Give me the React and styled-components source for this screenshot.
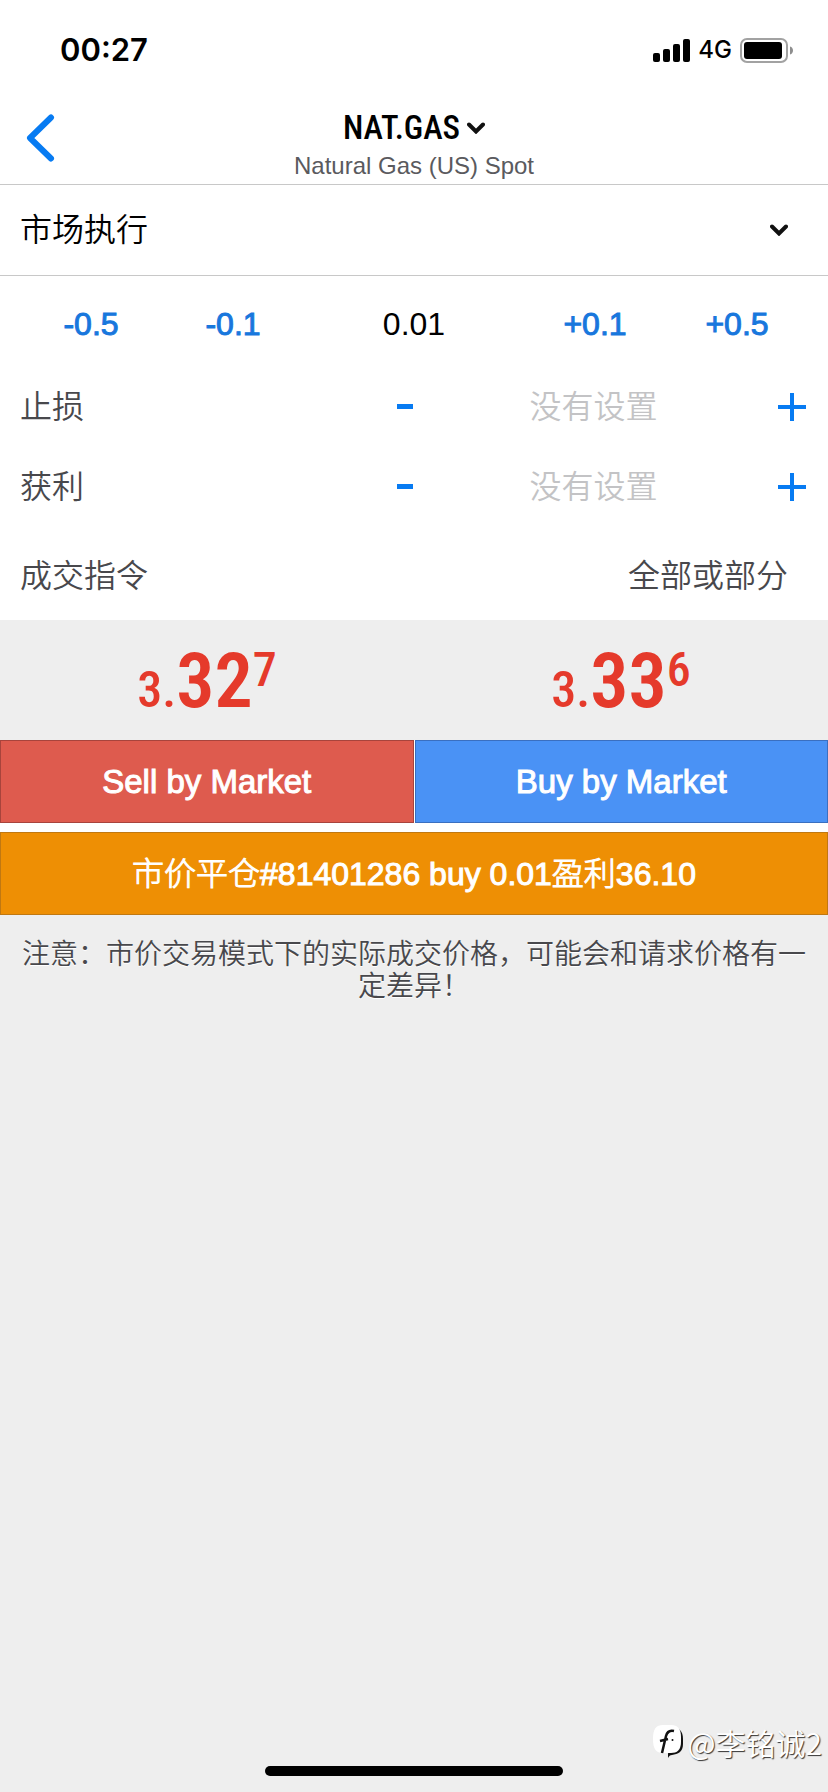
import React, { useState } from 'react';
import styled, { createGlobalStyle } from 'styled-components'

const GlobalStyle = createGlobalStyle
  `
  * {
    box-sizing: border-box;
  }

  body {
    margin: 0;
    background: #eeeeee;
    font-family: "Liberation Sans", "Noto Sans CJK SC", sans-serif;
    font-size: 32px;
    font-weight: 350;
    line-height: 40px;
    color: #000000;
  }

  button, input, select {
    margin: 0;
    padding: 0;
    border: none;
    border-radius: 0;
    background: none;
    color: inherit;
    font: inherit;
    outline: none;
    appearance: none;
  }

  button, select {
    cursor: pointer;
  }
`

const Page = styled.div
  `
  display: flex;
  flex-direction: column;
  min-height: 100vh;
`

const StatusBar = styled.div
  `
  display: flex;
  align-items: center;
  justify-content: space-between;
  height: 100px;
  padding: 0 34px 0 60px;
  background: #ffffff;
  font-family: Inter, sans-serif;
`

const Clock = styled.span
  `
  font-size: 31px;
  font-weight: 600;
`

const StatusIcons = styled.div
  `
  display: flex;
  align-items: center;
  gap: 8px;
  font-size: 24px;
  font-weight: 500;
`

const NavBar = styled.header
  `
  display: grid;
  grid-template-columns: 80px 1fr 80px;
  height: 85px;
  background: #ffffff;
  border-bottom: 1px solid #c8c8c8;
`

const BackButton = styled.button
  `
  display: flex;
  align-items: center;
  padding: 0 0 8px 26px;
  color: #077bf2;
`

const TitleBlock = styled.div
  `
  display: flex;
  flex-direction: column;
  align-items: center;
  padding-top: 6px;
`

const SymbolButton = styled.button
  `
  display: flex;
  align-items: center;
  gap: 7px;
  font-family: "Roboto Condensed", "Liberation Sans Narrow", sans-serif;
  font-size: 33px;
  font-weight: 500;
  line-height: 44px;
`

const Subtitle = styled.span
  `
  font-size: 24px;
  line-height: 32px;
  color: #5a5a5e;
`

const Form = styled.form
  `
  display: flex;
  flex-direction: column;
  background: #ffffff;
`

const ExecutionRow = styled.label
  `
  display: flex;
  align-items: center;
  height: 91px;
  padding: 0 40px 0 20px;
  border-bottom: 1px solid #c8c8c8;
`

const Picker = styled.select
  `
  flex: 1;
  color: ${props => props.$muted ? '#48484c' : '#000000'};
  text-align-last: ${props => props.$end ? 'right' : 'left'};
`

const LotRow = styled.div
  `
  display: grid;
  grid-template-columns: 142px 142px 1fr 142px 142px;
  align-items: center;
  height: 91px;
  padding: 4px 20px 0;
`

const StepButton = styled.button
  `
  color: #1877dd;
  -webkit-text-stroke: 1px #1877dd;
`

const LotInput = styled.input
  `
  width: 100%;
  text-align: center;
`

const Row = styled.div
  `
  display: grid;
  grid-template-columns: minmax(0, 1fr) 32px minmax(0, 1fr);
  align-items: center;
  height: 80px;
  padding: 0 22px 0 20px;
  color: #48484c;
`

const PriceField = styled.div
  `
  display: flex;
  align-items: center;
`

const PriceInput = styled.input
  `
  flex: 1;
  min-width: 0;
  text-align: center;

  &::placeholder {
    color: #c3c3c5;
    opacity: 1;
  }
`

const IconButton = styled.button
  `
  display: flex;
  justify-content: ${props => props.$end ? 'flex-end' : 'flex-start'};
  width: ${props => props.$end ? '48px' : '100%'};
  color: #077bf2;
`

const FillRow = styled.label
  `
  display: flex;
  align-items: center;
  height: 93px;
  padding: 4px 40px 0 20px;
  color: #48484c;
`

const Quotes = styled.div
  `
  display: grid;
  grid-template-columns: 1fr 1fr;
  height: 120px;
`

const Quote = styled.div
  `
  display: flex;
  align-items: baseline;
  justify-content: center;
  font-family: "Roboto Condensed", "Liberation Sans Narrow", sans-serif;
  font-weight: 500;
  line-height: 122px;
  color: #e53a2b;
`

const Whole = styled.span
  `
  font-size: 50px;
`

const Pips = styled.span
  `
  font-size: 76px;
  font-weight: 600;
`

const Fraction = styled.sup
  `
  align-self: flex-start;
  font-size: 48px;
  line-height: 100px;
`

const Actions = styled.div
  `
  display: grid;
  grid-template-columns: 1fr 1fr;
  gap: 9px 1px;
  background: #ffffff;
`

const ActionButton = styled.button
  `
  grid-column: ${props => props.$wide ? '1 / -1' : 'auto'};
  height: 83px;
  border: 1px solid ${props => props.$edge};
  background: ${props => props.$fill};
  font-size: ${props => props.$wide ? '32px' : '33px'};
  font-weight: 300;
  color: #ffffff;
  -webkit-text-stroke: 1px #ffffff;
`

const Note = styled.p
  `
  margin: 0;
  padding: 24px 20px;
  font-size: 28px;
  line-height: 32px;
  text-align: center;
  color: #48484c;
  text-shadow: 0 1px 0 #ffffff;
`

const Footer = styled.footer
  `
  display: flex;
  flex-direction: column;
  align-items: center;
  margin-top: auto;
  padding-bottom: 16px;
`

const Watermark = styled.div
  `
  display: flex;
  align-items: center;
  align-self: flex-end;
  gap: 3px;
  padding-right: 6px;
  font-family: "Noto Sans CJK SC", sans-serif;
  font-size: 30px;
  line-height: 40px;
  color: #ffffff;
  text-shadow: 1px 1px 1px #333333;
`

const HomeIndicator = styled.div
  `
  width: 36%;
  height: 10px;
  margin-top: 4px;
  border-radius: 5px;
  background: #000000;
`

function SignalIcon() {
  return (
    <svg width="37" height="23" viewBox="0 0 37 23" aria-hidden="true">
      <rect x="0" y="14" width="7" height="9" rx="2" />
      <rect x="10" y="10" width="7" height="13" rx="2" />
      <rect x="20" y="5" width="7" height="18" rx="2" />
      <rect x="30" y="0" width="7" height="23" rx="2" />
    </svg>
  )
}

function BatteryIcon() {
  return (
    <svg width="54" height="25" viewBox="0 0 54 25" aria-hidden="true">
      <rect x="1" y="1" width="46" height="23" rx="6" fill="none" stroke="#a2a2a2" strokeWidth="2" />
      <rect x="4" y="4" width="38" height="17" rx="3" />
      <path d="M50 8.500c4 1 4 7 0 8z" fill="#8e8e8e" />
    </svg>
  )
}

function ChevronDown() {
  return (
    <svg width="18" height="12" viewBox="0 0 18 12" aria-hidden="true">
      <path d="M2 2.500L9 9.500L16 2.500" fill="none" stroke="#111111" strokeWidth="4" strokeLinecap="round" />
    </svg>
  )
}

function ChevronLeft() {
  return (
    <svg width="29" height="48" viewBox="0 0 29 48" aria-hidden="true">
      <path d="M25 3.500L4 24L25 44.500" fill="none" stroke="currentColor" strokeWidth="6" strokeLinecap="round" strokeLinejoin="round" />
    </svg>
  )
}

function MinusIcon() {
  return (
    <svg width="16" height="30" viewBox="0 0 16 30" aria-hidden="true">
      <rect y="12" width="16" height="5" fill="currentColor" />
    </svg>
  )
}

function PlusIcon() {
  return (
    <svg width="28" height="28" viewBox="0 0 28 28" aria-hidden="true">
      <path d="M12 0h4v12h12v4H16v12h-4V16H0v-4h12z" fill="currentColor" />
    </svg>
  )
}

function BubbleIcon() {
  return (
    <svg width="31" height="34" viewBox="0 0 31 34" aria-hidden="true">
      <path d="M18 2C26 2 30 6 30 14v5c0 8-5 10-11 11c-2 0-3 1-4 3v-4z" fill="#111111" />
      <path d="M10 0h8c7 0 10 4 10 12v5c0 8-4 11-10 11H10C3 28 0 24 0 14S3 0 10 0z" fill="#ffffff" />
      <path d="M9 28l4-17c1-4 4-6 8-5M7 16l8-2" fill="none" stroke="#111111" strokeWidth="2.500" />
      <circle cx="19.500" cy="15" r="1" fill="#111111" />
    </svg>
  )
}

function PriceRow(props) {
  const { id, label } = props
  const [price, setPrice] = useState("")

  const step = (amount) => {
    const next = Number(price) + amount
    setPrice(next > 0 ? next.toFixed(3) : "")
  }

  return (
    <Row>
      <label htmlFor={id}>{label}</label>
      <IconButton type="button" aria-label={`${label} -`} onClick={() => step(-0.001)}><MinusIcon /></IconButton>
      <PriceField>
        <PriceInput id={id} value={price} placeholder="没有设置" onChange={evt => setPrice(evt.target.value)} />
        <IconButton $end type="button" aria-label={`${label} +`} onClick={() => step(0.001)}><PlusIcon /></IconButton>
      </PriceField>
    </Row>
  )
}

function App() {
  const [lots, setLots] = useState("0.01")

  const changeLots = (amount) => {
    setLots(Math.max(0.01, Number(lots) + amount).toFixed(2))
  }

  return (
    <Page>
      <GlobalStyle />
      <StatusBar>
        <Clock>00:27</Clock>
        <StatusIcons>
          <SignalIcon />
          <span>4G</span>
          <BatteryIcon />
        </StatusIcons>
      </StatusBar>

      <NavBar>
        <BackButton aria-label="返回"><ChevronLeft /></BackButton>
        <TitleBlock>
          <SymbolButton>NAT.GAS<ChevronDown /></SymbolButton>
          <Subtitle>Natural Gas (US) Spot</Subtitle>
        </TitleBlock>
      </NavBar>

      <Form onSubmit={evt => evt.preventDefault()}>
        <ExecutionRow>
          <Picker aria-label="执行方式">
            <option>市场执行</option>
          </Picker>
          <ChevronDown />
        </ExecutionRow>

        <LotRow>
          <StepButton type="button" onClick={() => changeLots(-0.5)}>-0.5</StepButton>
          <StepButton type="button" onClick={() => changeLots(-0.1)}>-0.1</StepButton>
          <LotInput aria-label="手数" value={lots} onChange={evt => setLots(evt.target.value)} />
          <StepButton type="button" onClick={() => changeLots(0.1)}>+0.1</StepButton>
          <StepButton type="button" onClick={() => changeLots(0.5)}>+0.5</StepButton>
        </LotRow>

        <PriceRow id="stop-loss" label="止损" />
        <PriceRow id="take-profit" label="获利" />

        <FillRow>
          成交指令
          <Picker $muted $end>
            <option>全部或部分</option>
          </Picker>
        </FillRow>
      </Form>

      <Quotes>
        <Quote><Whole>3.</Whole><Pips>32</Pips><Fraction>7</Fraction></Quote>
        <Quote><Whole>3.</Whole><Pips>33</Pips><Fraction>6</Fraction></Quote>
      </Quotes>

      <Actions>
        <ActionButton $fill="#de5b4e" $edge="#a8443c">Sell by Market</ActionButton>
        <ActionButton $fill="#4a92f5" $edge="#3a6fc0">Buy by Market</ActionButton>
        <ActionButton $wide $fill="#ee8f04" $edge="#c07812">市价平仓#81401286 buy 0.01盈利36.10</ActionButton>
      </Actions>

      <Note>注意：市价交易模式下的实际成交价格，可能会和请求价格有一定差异！</Note>

      <Footer>
        <Watermark><BubbleIcon />@李铭诚2</Watermark>
        <HomeIndicator />
      </Footer>
    </Page>
  );
}

export default App;
